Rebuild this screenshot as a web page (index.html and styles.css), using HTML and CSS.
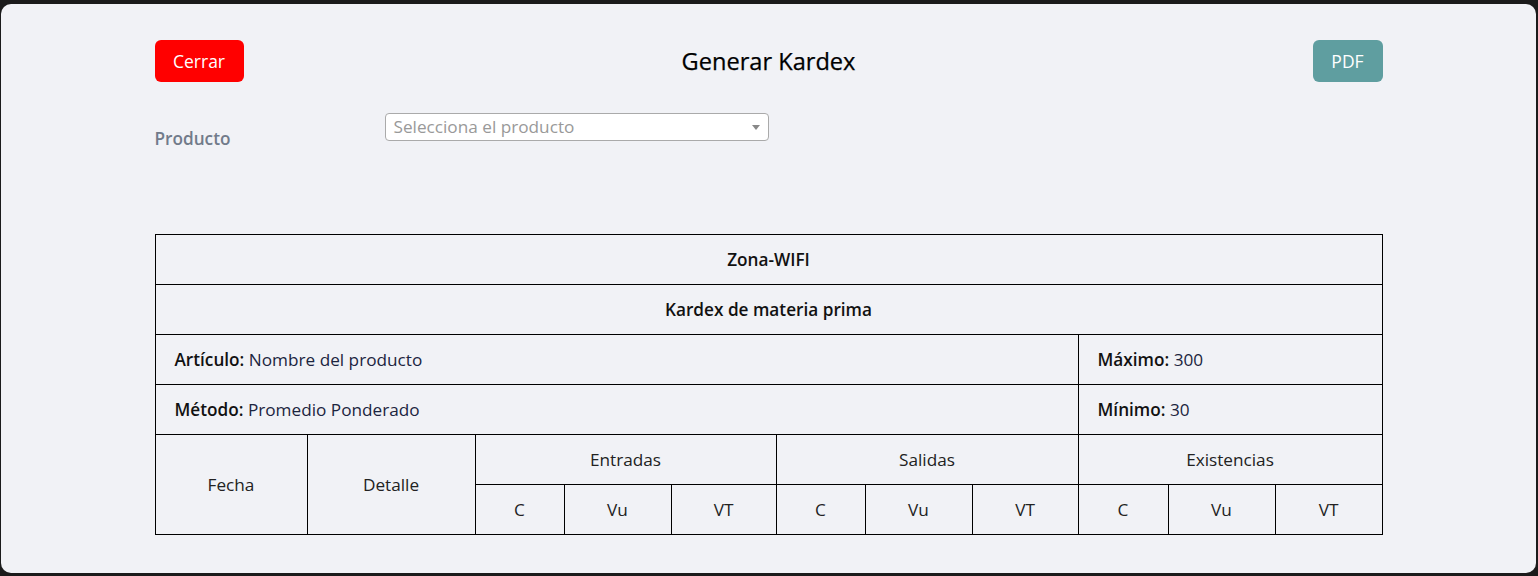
FILE: index.html
```html
<!DOCTYPE html>
<html lang="es">
<head>
<meta charset="utf-8">
<title>Generar Kardex</title>
<link rel="stylesheet" href="styles.css">
</head>
<body>
<div class="panel">
  <div class="wrap">
    <div class="header">
      <div class="left"><button class="btn btn-close">Cerrar</button></div>
      <h1 class="title">Generar Kardex</h1>
      <div class="right"><button class="btn btn-pdf">PDF</button></div>
    </div>
    <div class="field">
      <label class="field-label">Producto</label>
      <div class="select">
        <span class="placeholder">Selecciona el producto</span>
        <span class="arrow"></span>
      </div>
    </div>
    <table class="kardex">
      <colgroup>
        <col style="width:152px"><col style="width:168px">
        <col style="width:89px"><col style="width:107px"><col style="width:105px">
        <col style="width:89px"><col style="width:107px"><col style="width:106px">
        <col style="width:90px"><col style="width:107px"><col style="width:107px">
      </colgroup>
      <tr><td colspan="11" class="head">Zona-WIFI</td></tr>
      <tr><td colspan="11" class="head">Kardex de materia prima</td></tr>
      <tr>
        <td colspan="8" class="info"><b>Artículo:</b> Nombre del producto</td>
        <td colspan="3" class="info"><b>Máximo:</b> 300</td>
      </tr>
      <tr>
        <td colspan="8" class="info"><b>Método:</b> Promedio Ponderado</td>
        <td colspan="3" class="info"><b>Mínimo:</b> 30</td>
      </tr>
      <tr>
        <td rowspan="2" class="c">Fecha</td>
        <td rowspan="2" class="c">Detalle</td>
        <td colspan="3" class="c">Entradas</td>
        <td colspan="3" class="c">Salidas</td>
        <td colspan="3" class="c">Existencias</td>
      </tr>
      <tr>
        <td class="c">C</td><td class="c">Vu</td><td class="c">VT</td>
        <td class="c">C</td><td class="c">Vu</td><td class="c">VT</td>
        <td class="c">C</td><td class="c">Vu</td><td class="c">VT</td>
      </tr>
    </table>
  </div>
</div>
</body>
</html>
```
FILE: styles.css
```css
html, body {
  margin: 0;
  padding: 0;
  background: #1b1b1b;
  height: 576px;
  overflow: hidden;
}
body {
  font-family: "Open Sans", "Liberation Sans", sans-serif;
  color: #212529;
}
.panel {
  box-sizing: border-box;
  margin: 4px 2px 0 1px;
  height: 569px;
  background: #f1f2f6;
  border-radius: 10px;
  padding-top: 36px;
}
.wrap {
  width: 1228px;
  margin: 0 auto;
}
.header {
  display: grid;
  grid-template-columns: 1fr auto 1fr;
  align-items: center;
  height: 42px;
}
.right { text-align: right; }
.btn {
  height: 42px;
  border: none;
  border-radius: 6px;
  color: #fff;
  font-family: "Open Sans", "Liberation Sans", sans-serif;
  font-size: 17.5px;
  padding: 0;
  display: inline-block;
  vertical-align: top;
}
.btn-close { background: #ff0000; width: 89px; }
.btn-pdf { background: #5f9ea0; width: 70px; }
.title {
  margin: 0;
  font-size: 23.6px;
  font-weight: 500;
  color: #000;
  -webkit-text-stroke: 0.25px #000;
}
.field {
  display: flex;
  align-items: flex-start;
  margin-top: 31px;
  height: 121px;
}
.field-label {
  width: 230px;
  margin-top: 14px;
  font-size: 17.2px;
  font-weight: 600;
  line-height: 24px;
  color: #717b8a;
}
.select {
  box-sizing: border-box;
  width: 384px;
  height: 28px;
  background: #fff;
  border: 1px solid #aaa;
  border-radius: 4px;
  display: flex;
  align-items: center;
  justify-content: space-between;
  padding: 0 8px 0 8px;
}
.placeholder {
  color: #999;
  font-size: 17.2px;
  line-height: 26px;
}
.arrow {
  width: 0;
  height: 0;
  border-left: 4px solid transparent;
  border-right: 4px solid transparent;
  border-top: 5px solid #888;
  margin-top: 1px;
}
.kardex {
  border-collapse: collapse;
  table-layout: fixed;
  width: 1227px;
  font-size: 17.2px;
}
.kardex td {
  border: 1px solid #000;
  height: 50px;
  padding: 0;
  box-sizing: border-box;
}
.kardex .head {
  text-align: center;
  font-weight: 600;
  color: #111;
}
.kardex .info {
  padding-left: 19px;
  color: #1c2540;
}
.kardex .info b {
  font-weight: 600;
  color: #111;
}
.kardex .c {
  text-align: center;
  color: #222;
}
```
